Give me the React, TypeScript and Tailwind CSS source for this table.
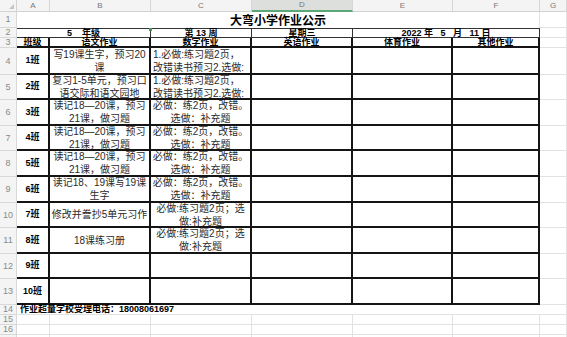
import React from "react"

const FONT = { fontFamily: '"Liberation Sans", "Noto Sans CJK SC", sans-serif' }

const COLS = ["A", "B", "C", "D", "E", "F", "G"]

type Row = { n: number; name: string; b?: string[]; c?: string[]; cLeft?: boolean }

const ROWS: Row[] = [
    { n: 4, name: "1班", b: ["写19课生字，预习20", "课"], c: ["1.必做:练习题2页，", "改错读书预习2.选做:"], cLeft: true },
    { n: 5, name: "2班", b: ["复习1-5单元，预习口", "语交际和语文园地"], c: ["1.必做:练习题2页，", "改错读书预习2.选做:"], cLeft: true },
    { n: 6, name: "3班", b: ["读记18—20课，预习", "21课，做习题"], c: ["必做：练2页，改错。", "选做：补充题"] },
    { n: 7, name: "4班", b: ["读记18—20课，预习", "21课，做习题"], c: ["必做：练2页，改错。", "选做：补充题"] },
    { n: 8, name: "5班", b: ["读记18—20课，预习", "21课，做习题"], c: ["必做：练2页，改错。", "选做：补充题"] },
    { n: 9, name: "6班", b: ["读记18、19课写19课", "生字"], c: ["必做：练2页，改错。", "选做：补充题"] },
    { n: 10, name: "7班", b: ["修改并誊抄5单元习作"], c: ["必做:练习题2页；选", "做:补充题"] },
    { n: 11, name: "8班", b: ["18课练习册"], c: ["必做:练习题2页；选", "做:补充题"] },
    { n: 12, name: "9班" },
    { n: 13, name: "10班" },
]

function RowNum({ n }: { n?: number }) {
    return <div className="bg-[#f4f4f4] border-r border-b border-[#d8d8d8] flex items-center justify-center text-[9px] text-[#8a8a8a] leading-none">{n}</div>
}

function Grid() {
    return <div className="border-r border-b border-[#e2e2e2]" />
}

function Lines({ lines, left }: { lines?: string[]; left?: boolean }) {
    return (
        <div className={`border-r-2 border-b-2 border-[#151515] overflow-hidden flex flex-col justify-center text-[10px] leading-[13px] text-[#2a2a2a] ${left ? "items-start pl-[2px]" : "items-center"}`}>
            {lines?.map(l => <span key={l} className="whitespace-nowrap">{l}</span>)}
        </div>
    )
}

export default function App() {
    return (
        <div style={FONT} className="w-[567px] h-[337px] overflow-hidden bg-white">
            <div className="grid grid-cols-[17px_33px_101px_101px_101px_100px_87px_1fr] grid-rows-[12px_16px_10px_10px_27px_25px_26px_25px_26px_26px_25px_26px_25px_26px_10px_10px_10px_10px]">
                {/* column headers */}
                <div className="bg-[#f4f4f4] border-r border-b border-[#d2d2d2] relative">
                    <div className="absolute right-[2px] bottom-[2px] w-0 h-0 border-l-[5px] border-l-transparent border-b-[5px] border-b-[#c4c4c4]" />
                </div>
                {COLS.map(c => (
                    <div key={c} className={`flex items-center justify-center text-[8px] leading-none text-[#777] border-r border-[#d6d6d6] ${c === "D" ? "bg-[#dcdfdc] border-b-2 border-b-[#5aa878]" : "bg-[#f4f4f4] border-b border-b-[#d2d2d2]"}`}>{c}</div>
                ))}

                {/* row 1 */}
                <RowNum n={1} />
                <div className="col-span-6 border-r border-[#e2e2e2] flex items-center justify-center text-[12px] font-bold text-black leading-none pt-[2px]">大弯小学作业公示</div>
                <Grid />

                {/* row 2 */}
                <RowNum n={2} />
                <div className="col-span-2 border-t border-b border-r border-[#333] flex items-center justify-center text-[9px] font-bold leading-none whitespace-pre">5    年级</div>
                <div className="border-t border-b border-r border-[#333] flex items-center justify-center text-[9px] font-bold leading-none whitespace-pre relative">
                    <div className="absolute -left-[2px] -top-[1px] w-[3px] h-[3px] bg-[#3c9a5a]" />
                    第 13 周
                </div>
                <div className="border-t border-b border-r border-[#333] flex items-center justify-center text-[9px] font-bold leading-none">星期三</div>
                <div className="col-span-2 border-t border-b border-r border-[#333] flex items-center justify-center text-[9px] font-bold leading-none whitespace-pre">2022 年   5   月   11 日</div>
                <Grid />

                {/* row 3 */}
                <RowNum n={3} />
                {["班级", "语文作业", "数学作业", "英语作业", "体育作业", "其他作业"].map(h => (
                    <div key={h} className="border-r-2 border-b-2 border-[#151515] flex items-center justify-center text-[9px] font-bold leading-none text-black">{h}</div>
                ))}
                <Grid />

                {/* body */}
                {ROWS.map(r => (
                    <React.Fragment key={r.n}>
                        <RowNum n={r.n} />
                        <div className="border-r-2 border-b-2 border-[#151515] flex items-center justify-center text-[9px] font-bold leading-none text-black">{r.name}</div>
                        <Lines lines={r.b} />
                        <Lines lines={r.c} left={r.cLeft} />
                        <Lines />
                        <Lines />
                        <Lines />
                        <Grid />
                    </React.Fragment>
                ))}

                {/* row 14 */}
                <RowNum n={14} />
                <div className="col-span-6 border-b border-[#e2e2e2] flex items-center pl-[3px] text-[9px] font-bold leading-none text-black whitespace-nowrap">作业超量学校受理电话：18008061697</div>
                <Grid />

                {[15, 16].map(n => (
                    <React.Fragment key={n}>
                        <RowNum n={n} />
                        {COLS.map(c => <Grid key={c} />)}
                    </React.Fragment>
                ))}
                <RowNum />
                {COLS.map(c => <Grid key={c} />)}
            </div>
        </div>
    )
}
